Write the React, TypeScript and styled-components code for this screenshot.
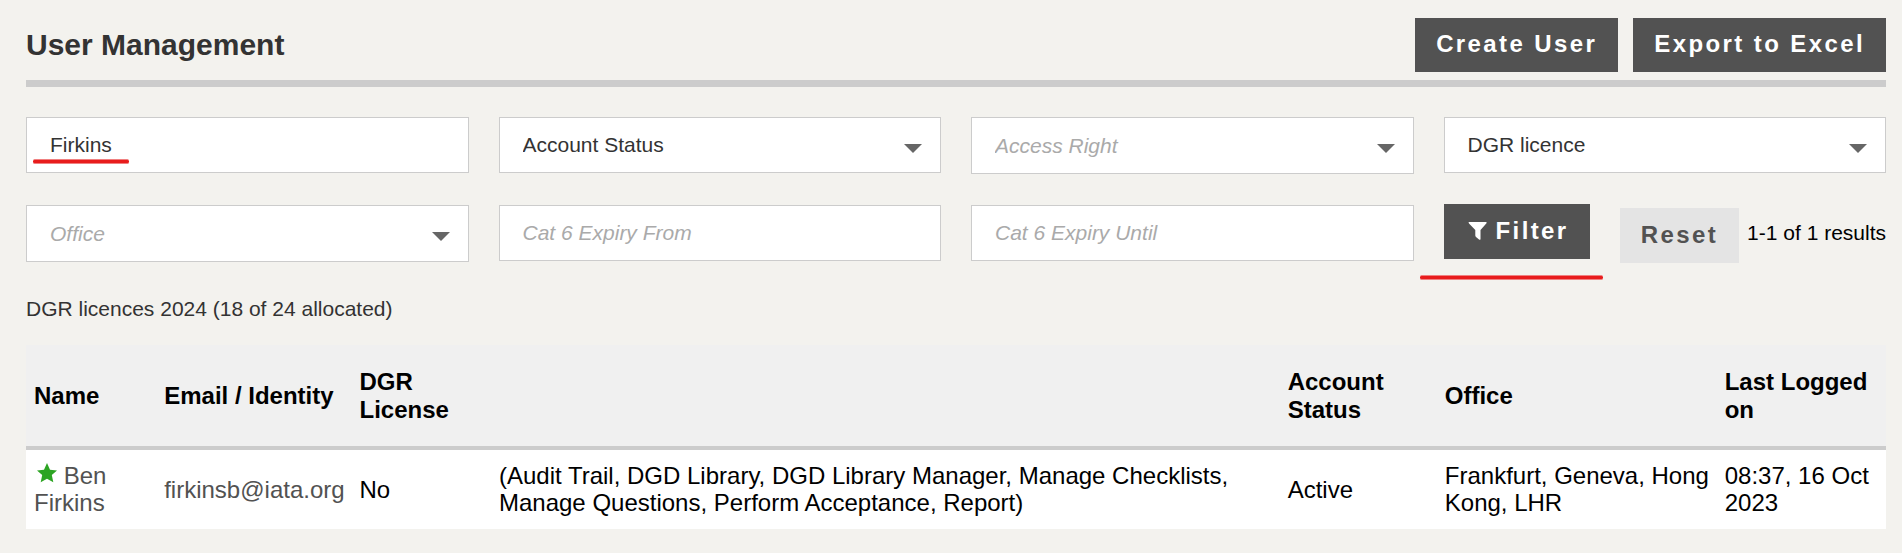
import React from "react";
import styled, { createGlobalStyle } from "styled-components";

const GlobalStyle = createGlobalStyle`
  *, *::before, *::after { box-sizing: border-box; }
  body {
    margin: 0;
    background: #f3f2ee;
    color: #000;
    font-family: "Liberation Sans", Arial, Helvetica, sans-serif;
    font-size: 24px;
  }
`;

const Page = styled.main`
  padding: 18px 16px 24px 26px;
`;

const Header = styled.header`
  display: flex;
  align-items: center;
  justify-content: space-between;
  padding-bottom: 8px;
  border-bottom: 7px solid #ccc;
`;

const Title = styled.h1`
  margin: 0;
  color: #333;
  font-size: 30px;
  line-height: 36px;
`;

const ButtonGroup = styled.div`
  display: flex;
  gap: 15px;
`;

const Button = styled.button<{ $light?: boolean }>`
  display: inline-flex;
  align-items: center;
  gap: 8px;
  height: 54px;
  padding: 0 21px 2px;
  border: 0;
  background: ${(p) => (p.$light ? "#e4e4e4" : "#525252")};
  color: ${(p) => (p.$light ? "#525252" : "#fff")};
  font: bold 24px/28px "Liberation Sans", Arial, sans-serif;
  letter-spacing: 0.1em;
  white-space: nowrap;
  cursor: pointer;
`;

const Filters = styled.form`
  display: grid;
  grid-template-columns: repeat(4, minmax(0, 1fr));
  align-items: start;
  gap: 31px 30px;
  margin-top: 30px;
`;

const Field = styled.div`
  position: relative;
`;

const controlStyle = `
  display: block;
  width: 100%;
  border: 1px solid #ccc;
  border-radius: 0;
  background: #fff;
  font-family: "Liberation Sans", Arial, sans-serif;
  font-size: 21px;
  line-height: 24px;
`;

const TextInput = styled.input`
  ${controlStyle}
  height: 56px;
  padding: 0 23px;
  color: #333;
  &::placeholder { color: #aaa; font-style: italic; opacity: 1; }
`;

const Select = styled.select<{ $hint?: boolean }>`
  ${controlStyle}
  appearance: none;
  height: ${(p) => (p.$hint ? "57px" : "56px")};
  padding: 0 48px 0 23px;
  color: ${(p) => (p.$hint ? "#aaa" : "#333")};
  font-style: ${(p) => (p.$hint ? "italic" : "normal")};
`;

const Arrow = styled.svg`
  position: absolute;
  top: 27px;
  right: 19px;
  pointer-events: none;
`;

const Actions = styled.div`
  display: flex;
  align-items: flex-start;
  min-height: 59px;
  margin-top: -1px;
  ${Button} { height: 55px; }
`;

const ResetGroup = styled.div`
  display: flex;
  align-items: center;
  align-self: stretch;
  gap: 8px;
  margin-left: auto;
  ${Button} { align-self: flex-end; }
`;

const Results = styled.span`
  padding-bottom: 2px;
  font-size: 21px;
  line-height: 24px;
  white-space: nowrap;
`;

const Underline = styled.span<{ $x: number; $y: number; $width: number }>`
  position: absolute;
  left: ${(p) => p.$x}px;
  top: ${(p) => p.$y}px;
  width: ${(p) => p.$width}px;
  height: 5px;
  border: solid #f08080;
  border-width: 1px 0;
  border-radius: 2px;
  background: #e81c1c;
`;

const LicenceNote = styled.p`
  margin: 34px 0 24px;
  color: #333;
  font-size: 21px;
  line-height: 24px;
`;

const Table = styled.table`
  width: 100%;
  border-collapse: separate;
  border-spacing: 0;
  table-layout: fixed;
`;

const Th = styled.th<{ $width: string }>`
  width: ${(p) => p.$width};
  height: 105px;
  padding: 0 4px 0 8px;
  border-bottom: 4px solid #ccc;
  background: #f0f0f0;
  line-height: 28px;
  text-align: left;
`;

const Td = styled.td`
  height: 79px;
  padding: 12px 4px 13px 8px;
  background: #fff;
  line-height: 27px;
`;

const CellLink = styled.a`
  color: #525252;
  text-decoration: none;
`;

const Star = styled.svg`
  margin-left: 3px;
  vertical-align: 1px;
`;

function SelectField({ label, hint }: { label: string; hint?: boolean }) {
  return (
    <Field>
      <Select aria-label={label} $hint={hint} defaultValue="">
        <option value="">{label}</option>
      </Select>
      <Arrow width="18" height="9" viewBox="0 0 18 9" aria-hidden="true">
        <path d="M0 0H18L9 9Z" fill="#666" />
      </Arrow>
    </Field>
  );
}

const columns = [
  { title: "Name", width: "7%" },
  { title: "Email / Identity", width: "10.5%" },
  { title: "DGR License", width: "7.5%" },
  { title: "", width: "42.4%" },
  { title: "Account Status", width: "8.45%" },
  { title: "Office", width: "15.05%" },
  { title: "Last Logged on", width: "9.1%" },
];

export default function App() {
  return (
    <>
      <GlobalStyle />
      <Page>
        <Header>
          <Title>User Management</Title>
          <ButtonGroup>
            <Button type="button">Create User</Button>
            <Button type="button">Export to Excel</Button>
          </ButtonGroup>
        </Header>

        <Filters onSubmit={(e) => e.preventDefault()}>
          <Field>
            <TextInput aria-label="Name" defaultValue="Firkins" />
            <Underline $x={7} $y={42} $width={96} />
          </Field>
          <SelectField label="Account Status" />
          <SelectField label="Access Right" hint />
          <SelectField label="DGR licence" />
          <SelectField label="Office" hint />
          <Field>
            <TextInput aria-label="Cat 6 Expiry From" placeholder="Cat 6 Expiry From" />
          </Field>
          <Field>
            <TextInput aria-label="Cat 6 Expiry Until" placeholder="Cat 6 Expiry Until" />
          </Field>
          <Actions>
            <Field>
              <Button type="submit">
                <svg width="23" height="20" viewBox="0 0 23 20" aria-hidden="true">
                  <path
                    d="M4 1H21Q22 1 21.5 2.2L15.5 9V18Q15.3 19.3 14 18.6L11 16Q10.3 15.4 10.3 14.5V9L4 2.4Q3 1 4 1Z"
                    fill="#fff"
                  />
                </svg>
                Filter
              </Button>
              <Underline $x={-24} $y={71} $width={183} />
            </Field>
            <ResetGroup>
              <Button type="reset" $light>Reset</Button>
              <Results>1-1 of 1 results</Results>
            </ResetGroup>
          </Actions>
        </Filters>

        <LicenceNote>DGR licences 2024 (18 of 24 allocated)</LicenceNote>

        <Table>
          <thead>
            <tr>
              {columns.map((c, i) => (
                <Th key={i} scope="col" $width={c.width}>{c.title}</Th>
              ))}
            </tr>
          </thead>
          <tbody>
            <tr>
              <Td>
                <CellLink href="#ben-firkins">
                  <Star width="20" height="20" viewBox="0 0 20 20" aria-hidden="true">
                    <path d="M10 0L13 6.7L20 7.4L14.8 12.1L16.3 19.3L10 15.7L3.7 19.3L5.2 12.1L0 7.4L7 6.7Z" fill="#2ca423" />
                  </Star>
                  {" "}Ben Firkins
                </CellLink>
              </Td>
              <Td><CellLink href="mailto:firkinsb@iata.org">firkinsb@iata.org</CellLink></Td>
              <Td>No</Td>
              <Td>
                (Audit Trail, DGD Library, DGD Library Manager, Manage Checklists, Manage
                Questions, Perform Acceptance, Report)
              </Td>
              <Td>Active</Td>
              <Td>Frankfurt, Geneva, Hong Kong, LHR</Td>
              <Td>08:37, 16 Oct 2023</Td>
            </tr>
          </tbody>
        </Table>
      </Page>
    </>
  );
}
